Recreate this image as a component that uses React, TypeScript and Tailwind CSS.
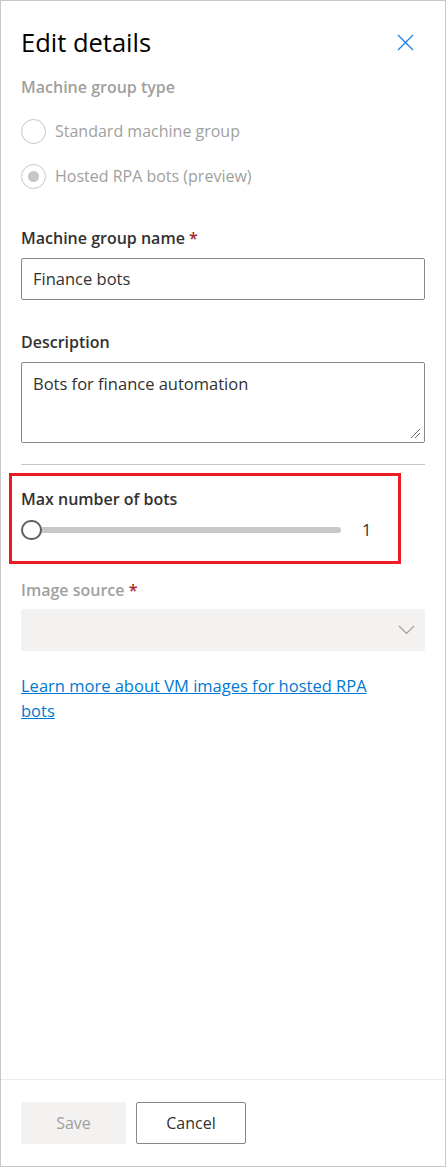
function Radio({ label, checked }: { label: string; checked?: boolean }) {
  return (
    <div className="flex h-[26px] items-center gap-[9px]">
      <span className="flex h-[25px] w-[25px] items-center justify-center rounded-full border border-[#c8c6c4]">
        {checked && <span className="h-[11px] w-[11px] rounded-full bg-[#c8c6c4]" />}
      </span>
      <span className="text-[16px] text-[#a19f9d]">{label}</span>
    </div>
  )
}

export default function App() {
  return (
    <div className="flex h-[1167px] w-[446px] flex-col border border-[#c8c8c8] bg-white font-['Open_Sans','Noto_Sans',sans-serif] text-[#323130]">
      <div className="flex-1 px-[20px]">
        <div className="flex items-center justify-between pt-[25px]">
          <h1 className="text-[25.5px] leading-[32px] text-black">Edit details</h1>
          <svg className="mr-[11px]" width="17" height="17" viewBox="0 0 17 17" aria-hidden="true">
            <path d="M1 1 16 16M16 1 1 16" stroke="#1a7ee6" strokeWidth="1.3" fill="none" />
          </svg>
        </div>

        <div className="mt-[17px] text-[16px] font-semibold text-[#a19f9d]">Machine group type</div>
        <div className="mt-[19px] flex flex-col gap-[19px]">
          <Radio label="Standard machine group" />
          <Radio label="Hosted RPA bots (preview)" checked />
        </div>

        <div className="mt-[37px] text-[16px] font-semibold">
          Machine group name <span className="text-[#a4262c]">*</span>
        </div>
        <div className="mt-[8px] flex h-[42px] items-center rounded-[2px] border border-[#8a8886] px-[11px] text-[16.5px]">
          Finance bots
        </div>

        <div className="mt-[30px] text-[16px] font-semibold">Description</div>
        <div className="relative mt-[8px] h-[81px] rounded-[2px] border border-[#8a8886] px-[11px] pt-[9px] text-[16.5px]">
          Bots for finance automation
          <svg className="absolute bottom-[3px] right-[3px]" width="12" height="12" viewBox="0 0 12 12" aria-hidden="true">
            <path d="M11 2 2 11M11 6 6 11" stroke="#6b6b6b" strokeWidth="1" fill="none" />
          </svg>
        </div>

        <div className="mt-[21px] h-px bg-[#c8c6c4]" />

        <div className="-ml-[12px] mt-[8px] w-[392px] border-[3px] border-[#ed1c24] pb-[18px] pl-[9px] pr-[26px] pt-[11px]">
          <div className="text-[16px] font-semibold">Max number of bots</div>
          <div className="mt-[7px] flex items-center">
            <div className="relative flex h-[20px] flex-1 items-center">
              <div className="ml-[10px] h-[6px] flex-1 rounded-full bg-[#c8c8c8]" />
              <span className="absolute left-0 top-0 h-[20px] w-[21px] rounded-full border-2 border-[#605e5c] bg-white" />
            </div>
            <span className="ml-[21px] w-[10px] text-[16.5px]">1</span>
          </div>
        </div>

        <div className="mt-[14px] text-[16px] font-semibold text-[#a19f9d]">
          Image source <span className="text-[#a4262c]">*</span>
        </div>
        <div className="mt-[7px] flex h-[42px] items-center justify-end rounded-[2px] bg-[#f3f2f1] pr-[10px]">
          <svg width="17" height="10" viewBox="0 0 17 10" aria-hidden="true">
            <path d="M1 1 8.5 8.5 16 1" stroke="#a19f9d" strokeWidth="1.2" fill="none" />
          </svg>
        </div>

        <a href="#" className="mt-[22px] block w-[370px] text-[16.5px] leading-[25px] text-[#0078d4] underline">
          Learn more about VM images for hosted RPA bots
        </a>
      </div>

      <div className="flex h-[87px] gap-[10px] border-t border-[#edebe9] px-[20px] pt-[22px]">
        <button className="h-[42px] w-[105px] rounded-[2px] bg-[#f3f2f1] text-[16px] text-[#a19f9d]">Save</button>
        <button className="h-[42px] w-[110px] rounded-[2px] border border-[#8a8886] text-[16px]">Cancel</button>
      </div>
    </div>
  )
}
